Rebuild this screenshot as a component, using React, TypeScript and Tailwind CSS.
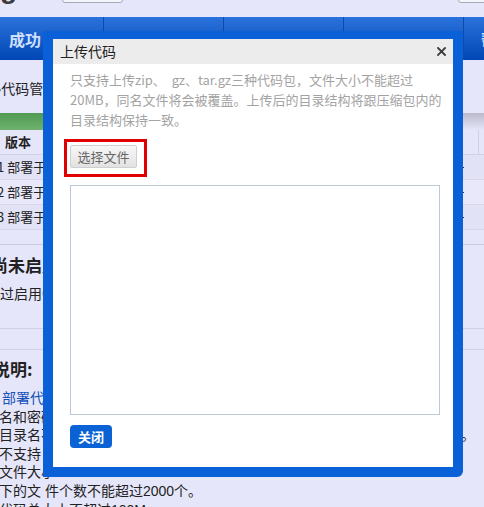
const rows = ['1 部署于', '2 部署于', '3 部署于'];

const notes = [
  { text: '部署代码前请先创建应用并选择运行环境', link: true },
  { text: '名和密码』为您的开发者账号', link: false },
  { text: '目录名不能包含中文、空格或其他特殊字符，只能使用字母、数字和下划线。', link: false },
  { text: '不支持 mysql 等本地数据库文件', link: false },
  { text: '文件大小', link: false },
  { text: '下的文 件个数不能超过2000个。', link: false },
  { text: '代码总大小不超过100M', link: false },
];

function CloseIcon() {
  return (
    <svg width="9" height="9" viewBox="0 0 9 9" className="block">
      <path d="M1 1 L8 8 M8 1 L1 8" stroke="#3a3a3a" strokeWidth="1.8" strokeLinecap="square" />
    </svg>
  );
}

function UploadDialog() {
  return (
    <div className="absolute left-[43px] top-[31px] w-[420px] h-[446px] border-[10px] border-t-[8px] border-[#0a60d6] rounded-br-[6px] bg-white flex flex-col">
      <div className="h-[25px] shrink-0 bg-[#ececec] flex items-center justify-between pl-[7px] pr-[7px]">
        <span className="text-[14px] leading-[25px] text-[#222]">上传代码</span>
        <CloseIcon />
      </div>
      <div className="flex flex-col pl-[17px] pr-[13px] pt-[6px]">
        <p className="text-[13px] leading-[20px] text-[#a3a3a3] whitespace-nowrap">
          只支持上传zip、&nbsp; gz、tar.gz三种代码包，文件大小不能超过
          <br />
          20MB，同名文件将会被覆盖。上传后的目录结构将跟压缩包内的
          <br />
          目录结构保持一致。
        </p>
        <div className="relative mt-[15px] self-start">
          <button className="block w-[67px] h-[23px] rounded-[2px] border border-[#cfcfcf] bg-linear-to-b from-[#f7f7f7] to-[#e2e2e2] text-[13px] leading-[21px] text-[#666]">
            选择文件
          </button>
          <span className="absolute -left-[6px] -top-[6px] w-[83px] h-[38px] border-[3px] border-[#e00000] pointer-events-none" />
        </div>
        <div className="mt-[17px] h-[230px] border border-[#b9c9d6] bg-white" />
        <button className="block mt-[10px] self-start w-[42px] h-[23px] rounded-[4px] bg-[#0a62d4] text-white text-[13px] font-bold leading-[23px]">
          关闭
        </button>
      </div>
    </div>
  );
}

export default function App() {
  return (
    <div className="relative w-[484px] h-[507px] overflow-hidden bg-[#e6e6fa] text-[#222] font-['Noto_Sans_CJK_SC','Noto_Sans',sans-serif]">
      {/* top header */}
      <div className="h-[17px] flex overflow-hidden">
        <div className="w-[62px] shrink-0">
          <span className="block -mt-[26px] text-[28px] leading-[30px] font-bold text-[#3b3b3b] font-['Liberation_Sans',sans-serif]">
            gine
          </span>
        </div>
        <span className="-mt-[21px] w-[61px] h-[24px] border border-[#a8a8ba] rounded-[3px] bg-[#f4f4fb]" />
        <span className="ml-auto -mr-[6px] -mt-[21px] w-[32px] h-[24px] border border-[#a8a8ba] rounded-[3px] bg-[#f4f4fb]" />
      </div>

      {/* nav */}
      <div className="h-[43px] flex bg-linear-to-b from-[#2a72dc] to-[#0047b5] text-[#cfe0ff] text-[16px] font-bold">
        <div className="w-[103px] shrink-0 pl-[9px] flex items-center">成功</div>
        <div className="w-[120px] shrink-0 border-l border-[#0f4aa6] pl-[17px] flex items-center">代码管理</div>
        <div className="w-[120px] shrink-0 border-l border-[#0f4aa6] pl-[17px] flex items-center">服务管理</div>
        <div className="w-[120px] shrink-0 border-l border-[#0f4aa6] pl-[17px] flex items-center">日志中心</div>
        <div className="w-[120px] shrink-0 border-l border-[#0f4aa6] pl-[17px] flex items-center whitespace-nowrap">帮助</div>
      </div>

      {/* breadcrumb */}
      <div className="h-[53px] flex items-center pt-[3px] text-[14px] -ml-[3px] whitespace-nowrap">›代码管理</div>

      {/* progress */}
      <div className="h-[17px] flex">
        <div className="w-[300px] bg-linear-to-b from-[#4f9a52] to-[#6eb26e]" />
        <div className="flex-1 bg-linear-to-b from-[#b9b9cb] to-[#e6e6fa]" />
      </div>

      {/* table */}
      <div className="flex flex-col text-[13px]">
        <div className="h-[25px] flex border-b border-[#d2d2e4]">
          <div className="w-[478px] shrink-0 pl-[5px] flex items-center font-bold">版本</div>
          <div className="flex-1 border-l border-[#cfcfe0]" />
        </div>
        {rows.map((r, i) => (
          <div
            key={r}
            className={`h-[25px] flex items-center border-b border-[#d6d6e8] ${i % 2 === 0 ? 'bg-[#e2e2f6]' : 'bg-[#e8e8fa]'}`}
          >
            <span className="w-[463px] shrink-0 -ml-[3px] whitespace-nowrap">{r}</span>
            <span className="w-[4px] h-[1px] bg-[#333]" />
          </div>
        ))}
      </div>

      <div className="mt-[14px] border-t border-[#c9c9dc]">
        <h2 className="pt-[8px] -ml-[9px] text-[17px] leading-[24px] font-bold whitespace-nowrap">尚未启用CDN加速</h2>
        <p className="mt-[6px] text-[14px] leading-[20px] whitespace-nowrap">过启用CDN加速，可以提升静态资源的访问速度</p>
        <div className="mt-[25px] h-[21px] border-t border-[#d0d0e2]" />
      </div>

      <div className="border-t border-[#d0d0e2]">
        <h2 className="pt-[7px] -ml-[7px] text-[17px] leading-[24px] font-bold whitespace-nowrap">说明:</h2>
        <ul className="mt-[8px] text-[14px] leading-[18.6px] -ml-[1px] font-['Liberation_Sans','Noto_Sans_CJK_SC',sans-serif]">
          {notes.map((n) => (
            <li key={n.text} className={`whitespace-nowrap ${n.link ? 'text-[#1552b8] ml-[3px]' : ''}`}>
              {n.text}
            </li>
          ))}
        </ul>
      </div>

      <UploadDialog />
    </div>
  );
}
